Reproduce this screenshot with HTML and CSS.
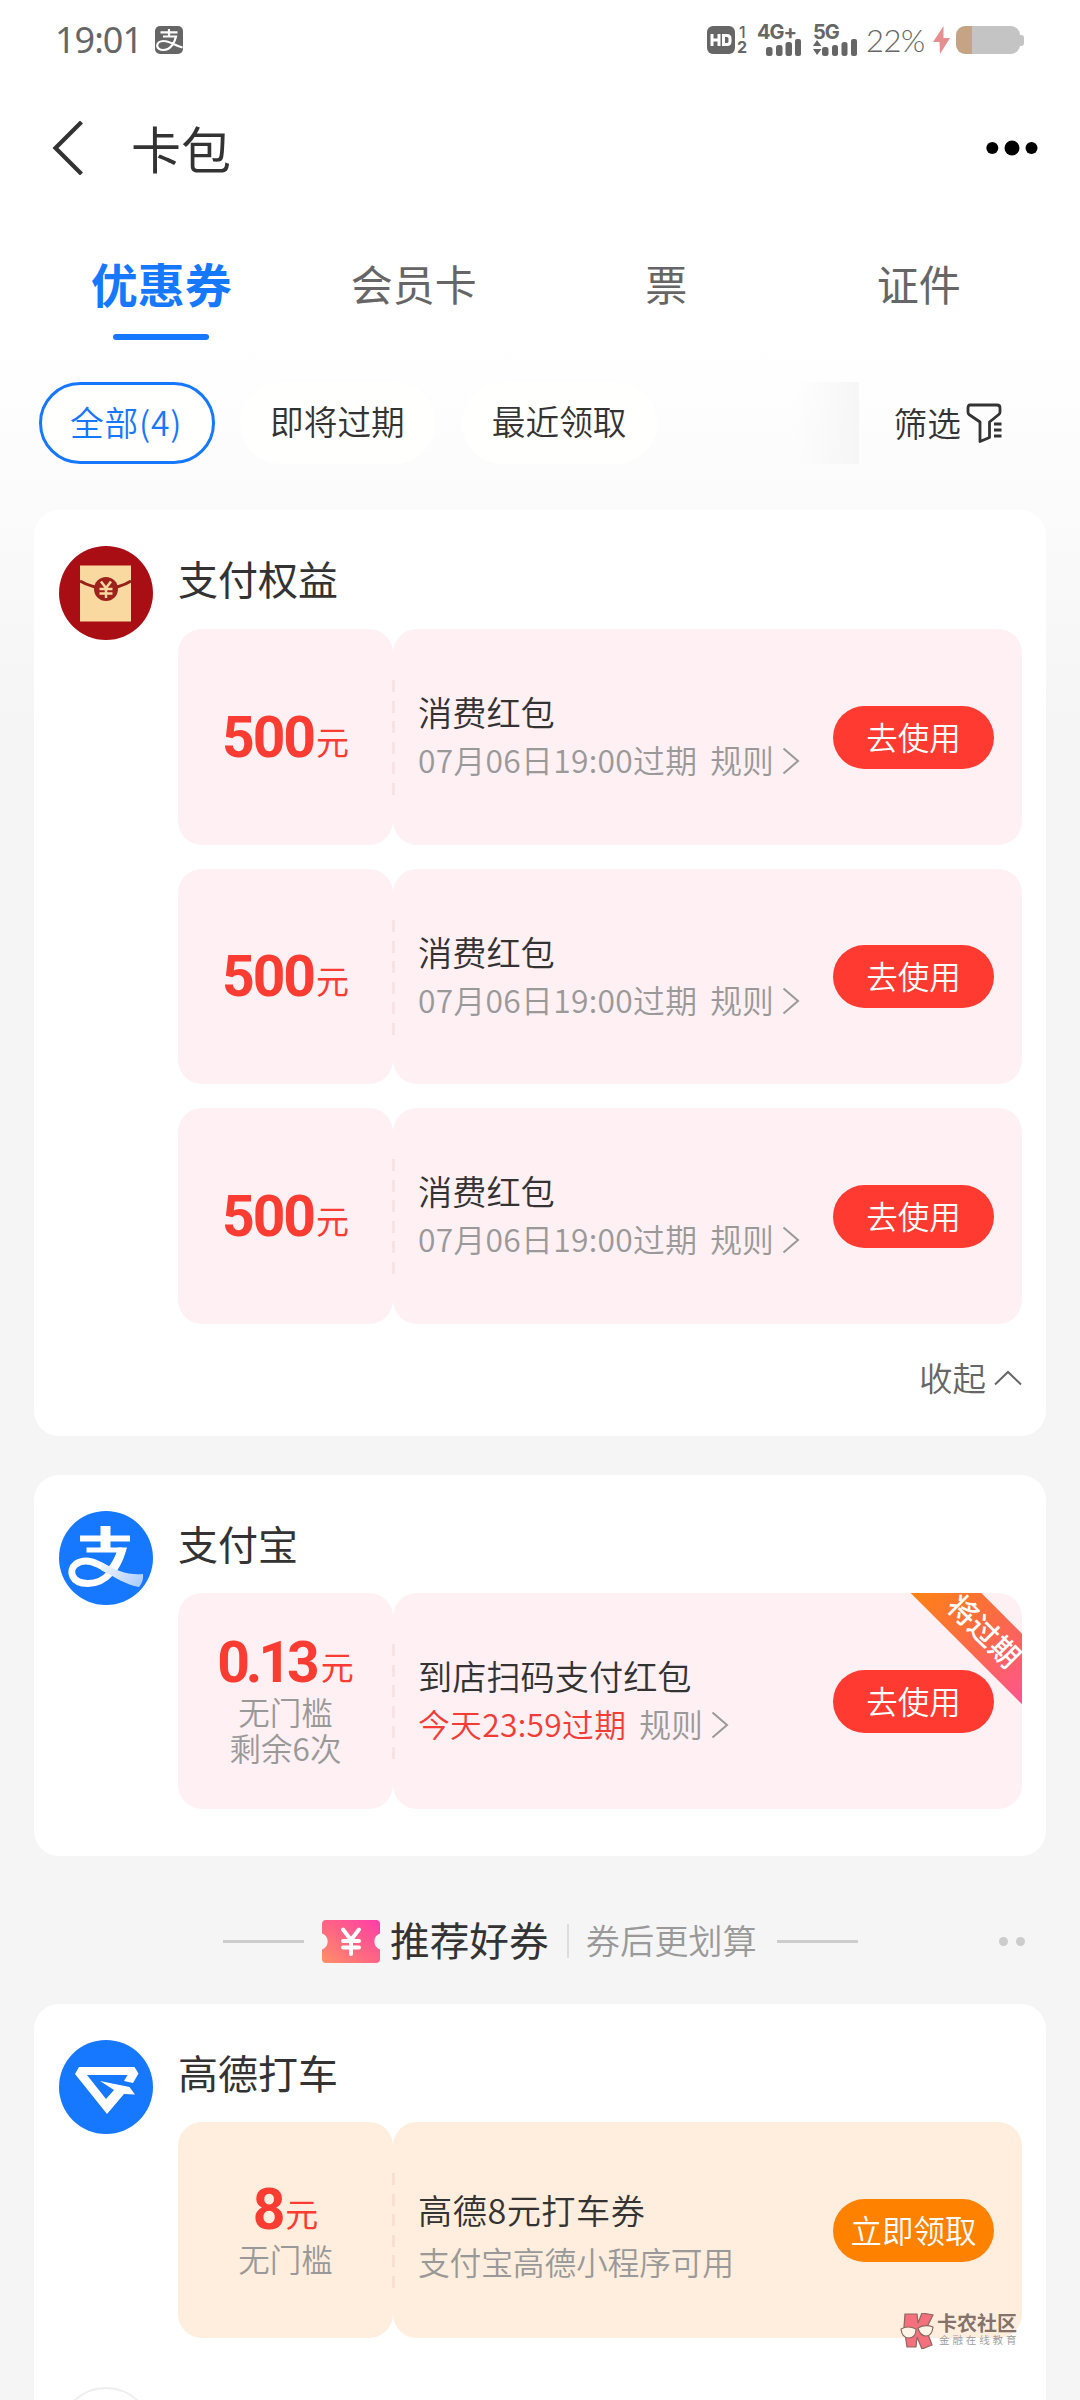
FILE: index.html
```html
<!DOCTYPE html>
<html lang="zh-CN">
<head>
<meta charset="utf-8">
<title>卡包</title>
<link rel="stylesheet" href="styles.css">
</head>
<body>
<svg class="defs" width="0" height="0">
  <defs>
    <linearGradient id="fade" gradientUnits="userSpaceOnUse" x1="40" y1="40" x2="84" y2="74">
      <stop offset="0" stop-color="#fff"/><stop offset="1" stop-color="#a9cbff"/>
    </linearGradient>
    <linearGradient id="pink" x1="0" y1="1" x2="1" y2="0">
      <stop offset="0" stop-color="#ff9068"/><stop offset=".5" stop-color="#ff6484"/><stop offset="1" stop-color="#ff3da8"/>
    </linearGradient>
    <symbol id="chev" viewBox="0 0 18 28"><path d="M1.500 1.500 16 14 1.500 26.500" fill="none" stroke="currentColor" stroke-width="2"/></symbol>
  </defs>
</svg>

<header class="status">
  <span class="clock">19:01</span>
  <svg class="status-app" width="28" height="28" viewBox="0 0 28 28">
    <rect width="28" height="28" rx="5" fill="#666"/>
    <path d="M14 3v7M5.500 6.300h17M8 10.500h13C20 15 16.500 24 8.500 24 0 24 0 14.800 9 15c6 0 10 4.500 18.500 6.500" fill="none" stroke="#fff" stroke-width="2.200"/>
  </svg>
  <div class="status-right">
    <svg width="28" height="28" viewBox="0 0 28 28">
      <rect width="28" height="28" rx="6" fill="#666"/>
      <path d="M5 8v12M12 8v12M5 14h7M16.500 9.500H20q3 0 3 3v3q0 3-3 3h-3.500z" fill="none" stroke="#fff" stroke-width="3"/>
    </svg>
    <div class="sims"><span>1</span><span>2</span></div>
    <div class="net net-4g">
      <span>4G+</span>
      <svg width="44" height="17" viewBox="0 0 44 17" fill="#666"><rect x="9" y="8" width="6.500" height="9" rx="2.500"/><rect x="19" y="6" width="6.500" height="11" rx="2.500"/><rect x="28.500" y="3" width="6.500" height="14" rx="2.500"/><rect x="38" width="6" height="17" rx="2"/></svg>
    </div>
    <div class="net net-5g">
      <span>5G</span>
      <svg width="44" height="17" viewBox="0 0 44 17" fill="#666"><path d="M0 7 4 1l4.500 6zM0 10h8.500L4 16z"/><rect x="9" y="8" width="6.500" height="9" rx="2.500"/><rect x="19" y="6" width="6" height="11" rx="2.500"/><rect x="28.500" y="3" width="6" height="14" rx="2.500"/><rect x="38" width="6" height="17" rx="2"/></svg>
    </div>
    <span class="percent">22%</span>
    <svg class="bolt" width="17" height="28" viewBox="0 0 17 28"><path d="M10.500 0 0 16h6.500L7 28l10-16h-6.500z" fill="#e58f90"/></svg>
    <div class="battery"></div><div class="battery-tip"></div>
  </div>
</header>

<nav class="nav">
  <svg width="32" height="54" viewBox="0 0 32 54"><path d="M30.500 1 4.500 27l26 26" fill="none" stroke="#333" stroke-width="4.200"/></svg>
  <h1>卡包</h1>
  <svg class="more" width="52" height="16" viewBox="0 0 52 16"><circle cx="6.300" cy="8" r="6"/><circle cx="26" cy="8" r="7.500"/><circle cx="45.500" cy="8" r="6"/></svg>
</nav>

<div class="tabs">
  <div class="tab active">优惠券</div>
  <div class="tab">会员卡</div>
  <div class="tab">票</div>
  <div class="tab">证件</div>
</div>

<div class="filters">
  <div class="pill on">全部(4)</div>
  <div class="pill">即将过期</div>
  <div class="pill">最近领取</div>
  <div class="fade"></div>
  <div class="filter">筛选
    <svg width="38" height="40" viewBox="0 0 38 40" fill="none" stroke="#333" stroke-width="2.800"><path d="M4 2h27q3 0 3 3v4q0 1.500-1.200 2.500L23.500 19v15.500L14 38.500V19L3 11.500Q2 10.500 2 9V5q0-3 2-3zM28 21h7.500M28 27h7.500M28 33h7.500" stroke-linejoin="round"/></svg>
  </div>
</div>

<main>
  <section class="card card-rights">
    <svg class="avatar" viewBox="0 0 94 94">
      <circle cx="47" cy="47" r="47" fill="#a90e15"/>
      <rect x="21" y="19.500" width="51" height="56" fill="#f9d9a0"/>
      <path d="M21 35q12 7 26 7t25-7" fill="none" stroke="#97201a" stroke-width="3"/>
      <circle cx="47" cy="43" r="12" fill="#9e211b"/>
      <path d="M42 35.500l5 6.500 5-6.500M47 42v10M40.500 43h13M40.500 47.500h13" fill="none" stroke="#f9d9a0" stroke-width="2.500"/>
    </svg>
    <div class="brand">
      <h2>支付权益</h2>
      <div class="coupon">
        <div class="worth"><div class="amount">500<small>元</small></div></div>
        <div class="detail">
          <div class="info"><div class="name">消费红包</div><div class="sub"><span class="date">07月06日19:00过期</span><span class="rule">规则</span><svg width="18" height="28"><use href="#chev"/></svg></div></div>
          <div class="btn">去使用</div>
        </div>
      </div>
      <div class="coupon">
        <div class="worth"><div class="amount">500<small>元</small></div></div>
        <div class="detail">
          <div class="info"><div class="name">消费红包</div><div class="sub"><span class="date">07月06日19:00过期</span><span class="rule">规则</span><svg width="18" height="28"><use href="#chev"/></svg></div></div>
          <div class="btn">去使用</div>
        </div>
      </div>
      <div class="coupon">
        <div class="worth"><div class="amount">500<small>元</small></div></div>
        <div class="detail">
          <div class="info"><div class="name">消费红包</div><div class="sub"><span class="date">07月06日19:00过期</span><span class="rule">规则</span><svg width="18" height="28"><use href="#chev"/></svg></div></div>
          <div class="btn">去使用</div>
        </div>
      </div>
      <div class="collapse">收起<svg width="28" height="16" viewBox="0 0 28 16"><path d="M1 14.500 14 2l13 12.500" fill="none" stroke="#666" stroke-width="2"/></svg></div>
    </div>
  </section>

  <section class="card card-alipay">
    <svg class="avatar" viewBox="0 0 94 94">
      <circle cx="47" cy="47" r="47" fill="#1677ff"/>
      <g fill="none" stroke="#fff">
        <path d="M46.500 15v24" stroke-width="10"/>
        <path d="M21 27.500h50" stroke-width="6"/>
        <path d="M27.500 39H63" stroke-width="5"/>
        <path d="M63 39C59 55 48 72.500 29 72.500 12 72.500 9 59 17 53 29 45 42 55 52 60.500" stroke-width="7"/>
      </g>
      <path d="M59 36.500h9C64 51 60 57 55 64l-8-5C54 51 57 44 59 36.500z" fill="#fff"/>
      <path d="M42 51C57 60 70 64.500 84 63q1 7-4 13C67 74 56 66 42 59z" fill="url(#fade)"/>
    </svg>
    <div class="brand">
      <h2>支付宝</h2>
      <div class="coupon">
        <div class="worth"><div class="amount decimal">0.13<small>元</small></div><div class="notes">无门槛<br>剩余6次</div></div>
        <div class="detail">
          <div class="info"><div class="name">到店扫码支付红包</div><div class="sub"><span class="date soon">今天23:59过期</span><span class="rule">规则</span><svg width="18" height="28"><use href="#chev"/></svg></div></div>
          <div class="ribbon">将过期</div>
          <div class="btn">去使用</div>
        </div>
      </div>
    </div>
  </section>

  <div class="recommend">
    <i class="rule-line"></i>
    <svg class="ticket" width="58" height="43" viewBox="0 0 58 43">
      <path d="M4 0h50q4 0 4 4v9.500a8.500 8.500 0 0 0 0 16V39q0 4-4 4H4q-4 0-4-4v-9.500a8.500 8.500 0 0 0 0-16V4q0-4 4-4z" fill="url(#pink)"/>
      <path d="M21 9.500 29 20l8-10.500M29 20v14M21 21h16M21 27.500h16" fill="none" stroke="#fff" stroke-width="4" stroke-linecap="round"/>
    </svg>
    <strong>推荐好券</strong>
    <i class="bar"></i>
    <span>券后更划算</span>
    <i class="rule-line"></i>
    <div class="dots"><i></i><i></i></div>
  </div>

  <section class="card card-offers">
    <svg class="avatar" viewBox="0 0 94 94">
      <circle cx="47" cy="47" r="47" fill="#1677ff"/>
      <path d="M20 27h55.500l4 6.500L74 43l-9-2 3.500-6H28l19 24 8-9-14-9 29.500 6 5.500 7.500-11-.5L48 74 16 34z" fill="#fff"/>
    </svg>
    <div class="brand">
      <h2>高德打车</h2>
      <div class="coupon orange">
        <div class="worth"><div class="amount">8<small>元</small></div><div class="notes">无门槛</div></div>
        <div class="detail">
          <div class="info"><div class="name">高德8元打车券</div><div class="sub">支付宝高德小程序可用</div></div>
          <div class="btn">立即领取</div>
        </div>
      </div>
    </div>
    <div class="avatar avatar-empty"></div>
  </section>
</main>

<div class="watermark">
  <svg width="34" height="36" viewBox="0 0 34 36" stroke="#8f6660" stroke-width="1.200">
    <path d="M5 1h12l1 9 4-10 11 2-7 14 6 16-10 4-5-12-1 10H7L4 14z" fill="#f4707c"/>
    <path d="M1 16q7-4 15 0 0 9-7 9T1 16zM18 15q7-4 15-1-1 9-7 9t-8-8z" fill="#fdf4e8"/>
  </svg>
  <div><b>卡农社区</b><em>金融在线教育</em></div>
</div>
</body>
</html>
```
FILE: styles.css
```css
* { box-sizing: border-box; margin: 0; padding: 0; }

body {
  position: relative;
  width: 1080px;
  height: 2400px;
  overflow: hidden;
  background: linear-gradient(#fff 340px, #fbfbfb 500px, #f5f5f5 720px);
  color: #333;
  font-family: "Noto Sans CJK SC", sans-serif;
  font-weight: 350;
}

svg { display: block; flex: none; }
.defs { position: absolute; }

/* status bar */
.status {
  display: flex;
  align-items: center;
  height: 80px;
  padding: 0 56px 0 55px;
  color: #666;
}
.clock { width: 100px; font: 400 36px/80px "Noto Sans", sans-serif; letter-spacing: -1px; }
.status-right { display: flex; align-items: center; margin-left: auto; }
.sims {
  display: flex;
  flex-direction: column;
  width: 22px;
  padding-left: 2px;
  font: 700 16px/15px Inter, sans-serif;
}
.sims span:first-child { padding-left: 2px; font-weight: 500; }
.net { display: flex; flex-direction: column; width: 44px; height: 30px; justify-content: space-between; }
.net span { font: 700 20px/14px Inter, sans-serif; letter-spacing: -1px; }
.net-5g { margin-left: 12px; }
.percent { width: 76px; padding-left: 9px; font: 300 31px/40px Lato, sans-serif; letter-spacing: -.5px; white-space: nowrap; }
.bolt { margin-right: 6px; }
.battery {
  width: 64px;
  height: 28px;
  border-radius: 9px;
  background: linear-gradient(90deg, #c4a484 16px, #c4c4c4 16px);
}
.battery-tip { width: 4px; height: 11px; border-radius: 0 3px 3px 0; background: #c4c4c4; }

/* title bar */
.nav { display: flex; align-items: center; height: 136px; padding: 0 42px 0 51px; }
.nav h1 { margin: -3px 0 0 48px; font-size: 50px; font-weight: 400; line-height: 60px; }
.nav .more { margin-left: auto; }

/* tabs */
.tabs { display: grid; grid-template-columns: repeat(4, 1fr); height: 124px; margin: 0 35px; }
.tab {
  display: flex;
  flex-direction: column;
  align-items: center;
  padding-top: 37px;
  color: #666;
  font-size: 42px;
  font-weight: 400;
  line-height: 60px;
}
.tab.active { color: #1677ff; font-size: 47px; font-weight: 700; }
.tab.active::after {
  content: "";
  width: 96px;
  height: 6px;
  margin-top: 21px;
  border-radius: 3px;
  background: #1677ff;
}

/* filter row */
.filters { display: flex; align-items: center; height: 82px; margin: 42px 76px 0 39px; }
.pill {
  height: 82px;
  margin-right: 27px;
  padding: 0 30px;
  border-radius: 41px;
  background: #fffffd;
  font-size: 33.700px;
  line-height: 78px;
}
.pill.on {
  width: 176px;
  margin-right: 25px;
  padding: 0 28px;
  border: 3px solid #1677ff;
  color: #1677ff;
  letter-spacing: .8px;
  line-height: 73px;
  white-space: nowrap;
}
.fade { width: 64px; height: 82px; margin-left: auto; background: linear-gradient(90deg, #f5f5f500, #f6f6f6); }
.filter { display: flex; align-items: center; margin-left: 35px; font-size: 33.700px; line-height: 76px; gap: 5px; }

/* cards */
.card {
  display: grid;
  grid-template-columns: 94px 844px;
  column-gap: 25px;
  align-content: start;
  margin: 0 34px;
  padding: 36px 24px 0 25px;
  border-radius: 25px;
  background: #fff;
}
.card-rights { height: 926px; margin-top: 46px; }
.card-alipay { height: 381px; margin-top: 39px; }
.card-offers { height: 500px; }
.avatar { width: 94px; height: 94px; }
.avatar-empty { margin-top: 49px; border: 2px solid #eee; border-radius: 50%; }
.brand { display: flex; flex-direction: column; gap: 24px; }
.brand h2 { height: 58px; font-size: 40px; font-weight: 400; line-height: 64px; }
.card-rights h2 { height: 59px; }

.coupon {
  --tint: #fef0f3;
  --dash: #f9e2e6;
  --action: #ff3a30;
  position: relative;
  display: flex;
  height: 215.500px;
}
.coupon.orange { --tint: #ffeedd; --dash: #f9ded2; --action: #ff8100; }
.coupon::after {
  content: "";
  position: absolute;
  left: 214px;
  top: 51px;
  width: 3px;
  height: 115px;
  background: repeating-linear-gradient(var(--dash) 0 12px, transparent 12px 20.600px);
}
.worth {
  display: flex;
  flex-direction: column;
  justify-content: center;
  align-items: center;
  width: 215px;
  padding-top: 2px;
  border-radius: 24px;
  background: var(--tint);
}
.amount {
  color: #fa3c32;
  font: 700 57px/54px Roboto, sans-serif;
  letter-spacing: -2px;
}
.amount.decimal { letter-spacing: -4px; }
.amount small {
  position: relative;
  top: -2px;
  margin-left: 2px;
  font: 400 33px/0 "Noto Sans CJK SC", sans-serif;
  letter-spacing: 0;
}
.amount.decimal small { margin-left: 5px; }
.notes { padding: 3px 0; color: #999; font-size: 31.500px; line-height: 36px; text-align: center; }
.detail {
  position: relative;
  display: flex;
  align-items: center;
  justify-content: space-between;
  width: 629px;
  padding: 1px 28px 0 25px;
  border-radius: 24px;
  overflow: hidden;
  background: var(--tint);
}
.info { padding-bottom: 4px; white-space: nowrap; }
.name { font-size: 34.200px; line-height: 48px; }
.sub { display: flex; align-items: center; color: #999; font-size: 31.800px; line-height: 48px; }
.date { letter-spacing: .3px; }
.soon { color: #f23c36; }
.rule { margin: 0 8px 0 13px; }
.sub svg { margin-top: 4px; }
.orange .info { padding: 9px 0 0; }
.orange .name { line-height: 52px; letter-spacing: .5px; }
.orange .sub { line-height: 52px; letter-spacing: -.2px; }
.btn {
  width: 161px;
  height: 63px;
  border-radius: 31.500px;
  background: var(--action);
  color: #fff;
  font-size: 31.500px;
  line-height: 60px;
  text-align: center;
  z-index: 1;
}
.ribbon {
  position: absolute;
  top: 13px;
  right: -41.500px;
  width: 160px;
  height: 50px;
  transform: rotate(45deg);
  background: linear-gradient(90deg, #ff8312, #fb6a45 50%, #ff5590);
  color: #fff;
  font-size: 29.500px;
  font-weight: 500;
  line-height: 46px;
  text-align: center;
}
.collapse {
  display: flex;
  align-items: center;
  justify-content: flex-end;
  gap: 8px;
  margin-top: 5px;
  color: #666;
  font-size: 33.500px;
  line-height: 48px;
}
.collapse svg { margin-top: 2px; }

/* recommendation heading */
.recommend { display: flex; align-items: center; height: 148px; padding: 22px 55px 0 223px; }
.rule-line { width: 81px; height: 3px; background: #ccc; }
.ticket { margin: 0 10px 0 18px; }
.recommend strong { font-size: 39.700px; font-weight: 400; line-height: 56px; margin-top: -5px; }
.bar { width: 2px; height: 34px; margin: 0 17px 0 18px; background: #ddd; }
.recommend span { margin: -4px 20px 0 0; color: #999; font-size: 34.200px; line-height: 50px; }
.dots { display: flex; gap: 8px; margin-left: auto; }
.dots i { width: 9px; height: 9px; border-radius: 50%; background: #ccc; }

/* watermark over the page */
.watermark { position: absolute; left: 900px; top: 2313px; display: flex; gap: 3px; }
.watermark b { display: block; color: #85736b; font-size: 20px; font-weight: 700; line-height: 19px; white-space: nowrap; }
.watermark em { display: block; padding: 1px 0 0 2px; color: #999; font-size: 10.500px; font-style: normal; line-height: 14px; letter-spacing: 2.900px; white-space: nowrap; }
```
